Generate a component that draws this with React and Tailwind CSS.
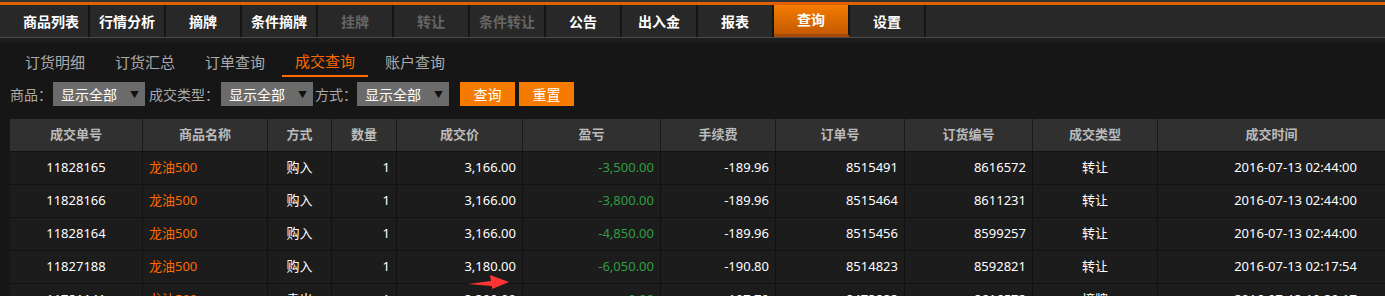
import React from "react";

const font = { fontFamily: '"Noto Sans", "Noto Sans CJK SC", sans-serif' };

const navItems = [
  { label: "商品列表" },
  { label: "行情分析" },
  { label: "摘牌" },
  { label: "条件摘牌" },
  { label: "挂牌", disabled: true },
  { label: "转让", disabled: true },
  { label: "条件转让", disabled: true },
  { label: "公告" },
  { label: "出入金" },
  { label: "报表" },
  { label: "查询", active: true },
  { label: "设置" },
];

const subTabs = ["订货明细", "订货汇总", "订单查询", "成交查询", "账户查询"];

const cols = [
  { title: "成交单号", w: "w-[133px]", align: "justify-center" },
  { title: "商品名称", w: "w-[125px]", align: "justify-start pl-[6px]" },
  { title: "方式", w: "w-[64px]", align: "justify-center" },
  { title: "数量", w: "w-[65px]", align: "justify-end pr-[6px]" },
  { title: "成交价", w: "w-[126px]", align: "justify-end pr-[6px]" },
  { title: "盈亏", w: "w-[138px]", align: "justify-end pr-[6px]" },
  { title: "手续费", w: "w-[115px]", align: "justify-end pr-[6px]" },
  { title: "订单号", w: "w-[129px]", align: "justify-end pr-[6px]" },
  { title: "订货编号", w: "w-[128px]", align: "justify-end pr-[6px]" },
  { title: "成交类型", w: "w-[125px]", align: "justify-center" },
  { title: "成交时间", w: "flex-1", align: "justify-end pr-[28px]" },
];

const rows = [
  ["11828165", "龙油500", "购入", "1", "3,166.00", "-3,500.00", "-189.96", "8515491", "8616572", "转让", "2016-07-13 02:44:00"],
  ["11828166", "龙油500", "购入", "1", "3,166.00", "-3,800.00", "-189.96", "8515464", "8611231", "转让", "2016-07-13 02:44:00"],
  ["11828164", "龙油500", "购入", "1", "3,166.00", "-4,850.00", "-189.96", "8515456", "8599257", "转让", "2016-07-13 02:44:00"],
  ["11827188", "龙油500", "购入", "1", "3,180.00", "-6,050.00", "-190.80", "8514823", "8592821", "转让", "2016-07-13 02:17:54"],
  ["11781141", "龙油500", "卖出", "1", "3,300.00", "0.00", "-197.70", "8473882", "8616572", "摘牌", "2016-07-13 10:20:17"],
];

function Select() {
  return (
    <div className="relative w-[92px] h-[24px] bg-[#6b6b6b] flex items-center pl-[8px] text-white text-[14px] shrink-0">
      显示全部
      <span className="absolute right-[6px] top-[6px] text-[9px] text-[#111]">▼</span>
    </div>
  );
}

export default function App() {
  return (
    <div className="w-[1385px] h-[296px] overflow-hidden bg-[#161616] relative" style={font}>
      {/* top nav */}
      <div className="h-[2px] bg-[#333]" />
      <div className="h-[3px] bg-[#e06000]" />
      <div className="h-[32px] bg-[#282828] flex pl-[14px]">
        {navItems.map((n) => (
          <div
            key={n.label}
            className={`w-[76px] flex items-center justify-center text-[14px] font-bold border-r-2 border-[#141414] ${
              n.active
                ? "bg-gradient-to-b from-[#f57c00] to-[#c55a00] text-white border-b-[3px] border-b-[#a54a00]"
                : n.disabled
                ? "text-[#666]"
                : "text-white"
            }`}
          >
            {n.label}
          </div>
        ))}
      </div>
      <div className="h-[1px] bg-[#4a4a4a]" />
      <div className="h-[5px] bg-[#1c1c1c]" />

      {/* sub tabs */}
      <div className="flex pl-[12px] gap-[4px] h-[34px] pt-[5px]">
        {subTabs.map((t) => (
          <div
            key={t}
            className={`w-[86px] flex items-center justify-center text-[15px] ${
              t === "成交查询" ? "text-[#ff6a00] border-b-2 border-[#ff6a00]" : "text-[#aaa]"
            }`}
          >
            {t}
          </div>
        ))}
      </div>

      {/* filters */}
      <div className="flex items-center h-[24px] mt-[5px] pl-[10px] text-[14px] text-[#aaa]">
        <span className="w-[43px] shrink-0">商品：</span>
        <Select />
        <span className="w-[76px] pl-[4px] shrink-0">成交类型：</span>
        <Select />
        <span className="w-[44px] pl-[2px] shrink-0">方式：</span>
        <Select />
        <button className="ml-[11px] w-[55px] h-[24px] bg-[#f57a00] text-white text-[14px]">查询</button>
        <button className="ml-[4px] w-[55px] h-[24px] bg-[#f57a00] text-white text-[14px]">重置</button>
      </div>

      {/* table */}
      <div className="ml-[10px] mt-[13px]">
        <div className="flex h-[32px] bg-[#303030]">
          {cols.map((c, i) => (
            <div
              key={c.title}
              className={`${c.w} flex items-center justify-center text-[13px] font-bold text-[#bbb] ${
                i < cols.length - 1 ? "border-r border-[#1a1a1a]" : ""
              }`}
            >
              {c.title}
            </div>
          ))}
        </div>
        {rows.map((r, ri) => (
          <div key={ri} className="flex h-[33px] bg-[#1c1c1c] border-t border-[#111]">
            {r.map((v, ci) => (
              <div
                key={ci}
                className={`${cols[ci].w} ${cols[ci].align} flex items-center text-[13px] ${
                  ci < r.length - 1 ? "border-r border-[#111]" : ""
                } ${ci === 1 ? "text-[#ff6a00]" : ci === 5 ? "text-[#2e9e42]" : "text-white"}`}
              >
                {v}
              </div>
            ))}
          </div>
        ))}
      </div>

      {/* red arrow annotation */}
      <svg className="absolute left-[468px] top-[275px]" width="41" height="15" viewBox="0 0 41 15">
        <path d="M0 9 L23 6 L22 0 L41 7 L24 14 L24 11 Z" fill="#ff3535" />
      </svg>
    </div>
  );
}
